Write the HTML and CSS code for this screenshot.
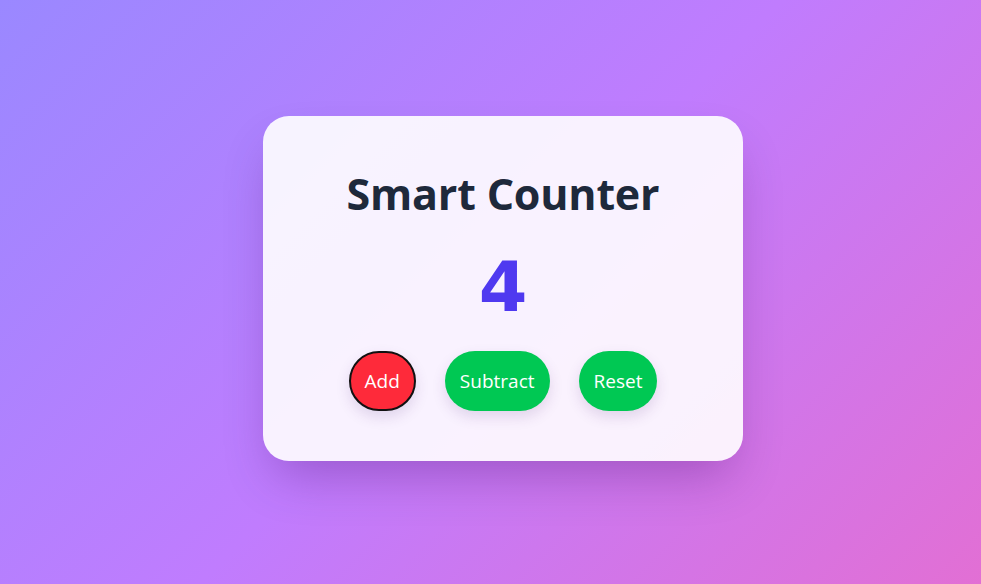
FILE: index.html
```html
<!DOCTYPE html>
<html lang="en">
<head>
<meta charset="utf-8">
<title>Smart Counter</title>
<link rel="stylesheet" href="styles.css">
</head>
<body>
  <main class="stage">
    <section class="card">
      <h1 class="title">Smart Counter</h1>
      <div class="count">4</div>
      <div class="actions">
        <button class="btn btn-add">Add</button>
        <button class="btn btn-green">Subtract</button>
        <button class="btn btn-green">Reset</button>
      </div>
    </section>
  </main>
</body>
</html>
```
FILE: styles.css
```css
* { box-sizing: border-box; }
html, body { margin: 0; height: 100%; }
body {
  background: linear-gradient(135deg, #9a88ff 0%, #c07cfe 50%, #e26fd4 100%);
  font-family: "Open Sans", "Noto Sans", sans-serif;
}
.stage {
  height: 100%;
  display: flex;
  align-items: center;
  justify-content: center;
  padding-left: 25px;
  padding-bottom: 7px;
}
.card {
  width: 480px;
  height: 345px;
  background: rgba(255, 255, 255, 0.9);
  border-radius: 26px;
  box-shadow: 0 25px 50px -12px rgba(60, 0, 90, 0.3);
  display: flex;
  flex-direction: column;
  align-items: center;
  padding-top: 48px;
}
.title {
  margin: 0;
  font-size: 43px;
  font-weight: 700;
  color: #1e293b;
  line-height: 60px;
  letter-spacing: -0.2px;
}
.count {
  margin-top: 26px;
  font-family: "DejaVu Sans", sans-serif;
  font-weight: 700;
  font-size: 70px;
  line-height: 74px;
  color: #4f39f0;
}
.actions {
  margin-top: 27px;
  display: flex;
  gap: 29px;
}
.btn {
  height: 60px;
  border: none;
  border-radius: 30px;
  padding: 0 15px;
  font-family: "Open Sans", "Noto Sans", sans-serif;
  font-size: 19px;
  color: #fff;
  box-shadow: 0 6px 14px rgba(80, 40, 120, 0.15);
  cursor: pointer;
}
.btn-add {
  background: #fe2a3a;
  border: 2px solid #111;
  padding: 0 14px;
}
.btn-green {
  background: #00c853;
}
```
